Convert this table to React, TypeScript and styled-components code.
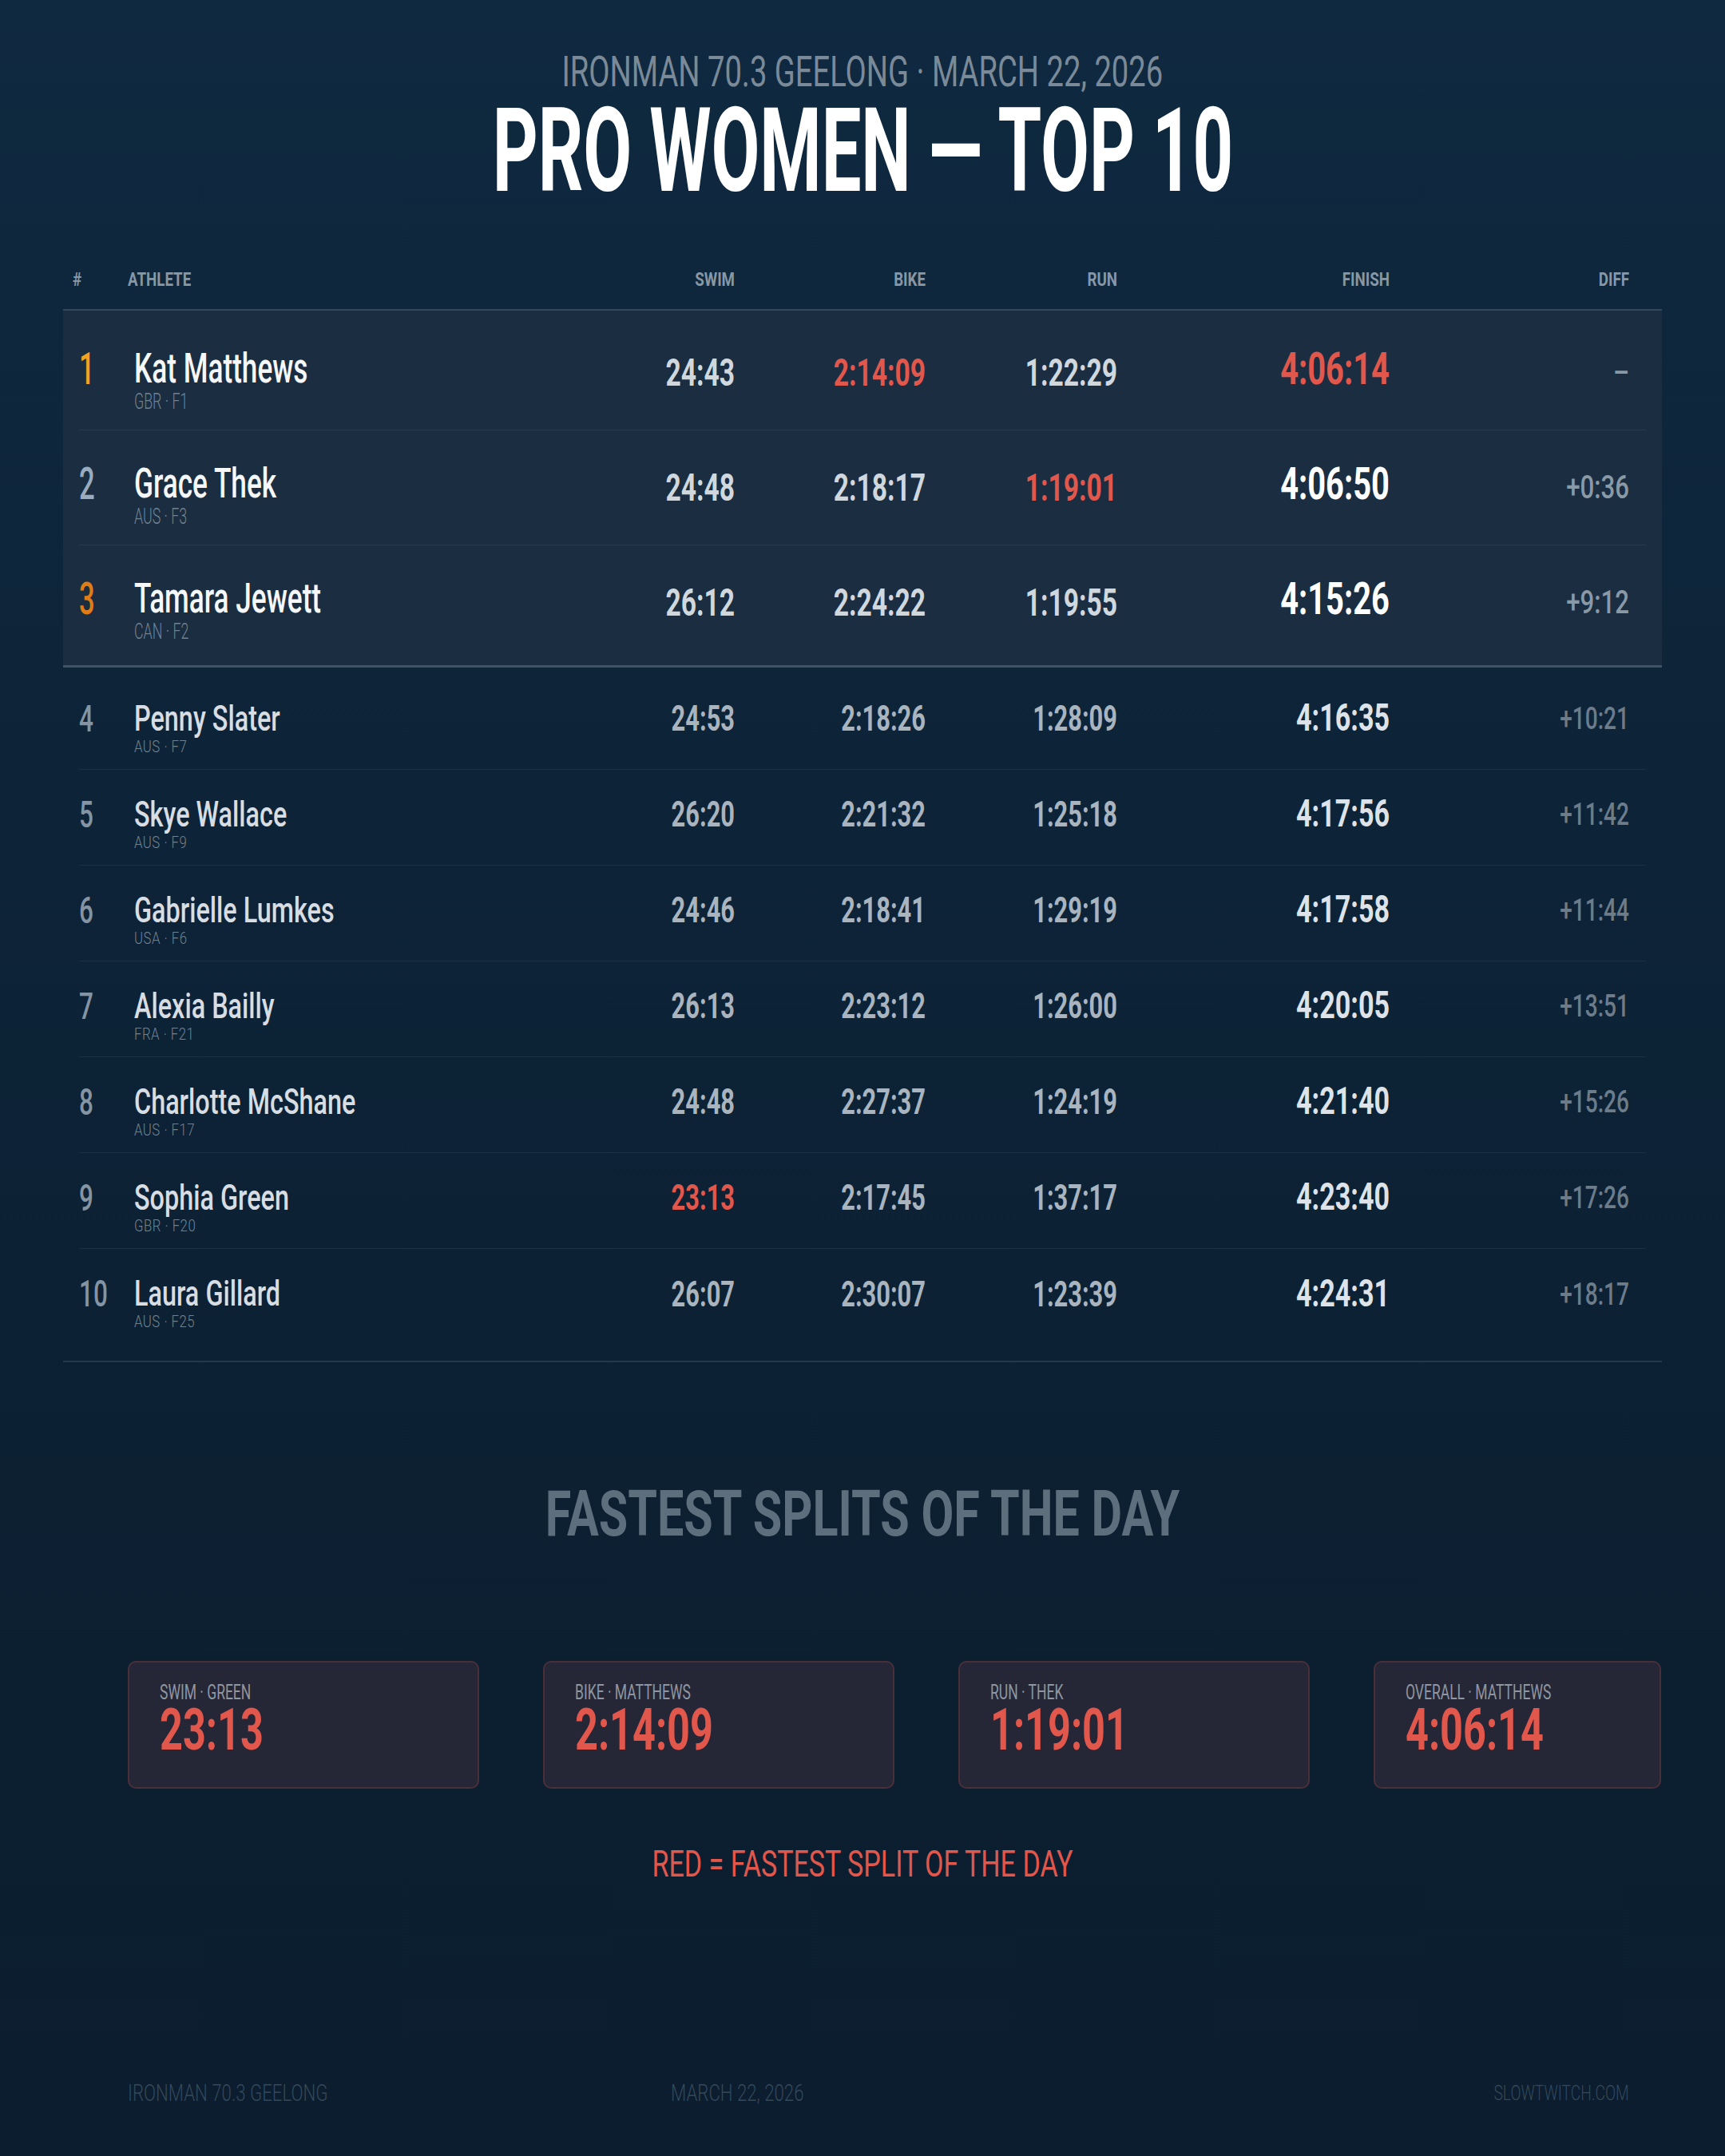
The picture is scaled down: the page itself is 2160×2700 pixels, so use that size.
import styled, { createGlobalStyle, css } from 'styled-components';

const RED = '#e2574c';

const GlobalStyle = createGlobalStyle`
  html, body {
    margin: 0;
    padding: 0;
    background: #0c1e2f;
  }
  * {
    box-sizing: border-box;
  }
`;

// no condensed face is installed, so the narrow look comes from a horizontal squeeze
const squeeze = (k: number, origin: 'left' | 'right' | 'center' = 'left') => css`
  transform: scaleX(${k});
  transform-origin: ${origin} center;
`;

const Page = styled.div`
  width: 2160px;
  height: 2700px;
  overflow: hidden;
  display: flex;
  flex-direction: column;
  background: linear-gradient(180deg, #0f2940 0%, #0d2337 40%, #0b1d2e 100%);
  font-family: Roboto, "Liberation Sans", sans-serif;
  color: #e6ebef;
`;

const Header = styled.header`
  display: flex;
  flex-direction: column;
  align-items: center;
  padding-top: 64px;
`;

const Eyebrow = styled.div`
  font-size: 53px;
  line-height: 52px;
  font-weight: 400;
  color: #7a8a98;
  white-space: nowrap;
  ${squeeze(0.72, 'center')};
`;

const Title = styled.h1`
  margin: 2px 0 0;
  font-size: 146px;
  line-height: 144px;
  font-weight: 700;
  color: #ffffff;
  white-space: nowrap;
  ${squeeze(0.605, 'center')};
`;

const Table = styled.section`
  margin: 76px 79px 0;
  display: flex;
  flex-direction: column;
  border-bottom: 2px solid #25394c;
`;

const cols = css`
  display: grid;
  grid-template-columns: 69px 1fr 220px 239px 240px 341px 300px;
  align-items: center;
`;

const HeadRow = styled.div`
  ${cols};
  padding: 0 41px 25px 12px;
  border-bottom: 2px solid #33485b;
`;

const HeadCell = styled.div<{ $right?: boolean }>`
  font-size: 24px;
  line-height: 24px;
  font-weight: 700;
  color: #8797a5;
  text-align: ${(p) => (p.$right ? 'right' : 'left')};
  ${(p) => squeeze(0.78, p.$right ? 'right' : 'left')};
`;

const Podium = styled.div`
  background: #1a2d41;
  padding: 6px 20px;
  border-bottom: 3px solid #3e5366;
`;

const Rest = styled.div`
  padding: 8px 20px 20px;
`;

const Row = styled.div<{ $top?: boolean }>`
  ${cols};
  padding-right: 21px;
  height: ${(p) => (p.$top ? '144px' : '120px')};
  border-bottom: 1px solid ${(p) => (p.$top ? '#27394c' : '#1b3044')};
  &:last-child {
    border-bottom: none;
  }
`;

const RANK_COLORS: Record<number, string> = {
  1: '#f2a21e',
  2: '#9aabbd',
  3: '#df7c16',
};

const Rank = styled.div<{ $top?: boolean; $color: string }>`
  font-size: ${(p) => (p.$top ? '55px' : '47px')};
  line-height: 1;
  padding-bottom: 9px;
  font-weight: 500;
  color: ${(p) => p.$color};
  ${(p) => squeeze(p.$top ? 0.63 : 0.67)};
`;

const Athlete = styled.div<{ $top?: boolean }>`
  display: flex;
  flex-direction: column;
  margin-top: ${(p) => (p.$top ? '20px' : '18px')};
`;

const Name = styled.div<{ $top?: boolean }>`
  font-size: ${(p) => (p.$top ? '51px' : '45px')};
  line-height: ${(p) => (p.$top ? '52px' : '44px')};
  font-weight: 500;
  white-space: nowrap;
  color: ${(p) => (p.$top ? '#f5f7f9' : '#d7dde2')};
  ${(p) => squeeze(p.$top ? 0.69 : 0.72)};
`;

const Sub = styled.div<{ $top?: boolean }>`
  font-size: ${(p) => (p.$top ? '27px' : '21px')};
  line-height: ${(p) => (p.$top ? '30px' : '26px')};
  font-weight: 300;
  letter-spacing: ${(p) => (p.$top ? '0' : '0.6px')};
  color: #718190;
  white-space: nowrap;
  ${(p) => squeeze(p.$top ? 0.66 : 0.8)};
`;

const Split = styled.div<{ $top?: boolean; $best?: boolean }>`
  text-align: right;
  font-size: ${(p) => (p.$top ? '48px' : '45px')};
  line-height: 1;
  padding-bottom: ${(p) => (p.$top ? '0' : '8px')};
  font-weight: 700;
  color: ${(p) => (p.$best ? RED : p.$top ? '#d0d7dd' : '#a9b4be')};
  ${(p) => squeeze(p.$top ? 0.7 : 0.685, 'right')};
`;

const Finish = styled.div<{ $top?: boolean; $best?: boolean }>`
  text-align: right;
  font-size: ${(p) => (p.$top ? '55px' : '48px')};
  line-height: 1;
  padding-bottom: 9px;
  font-weight: 700;
  color: ${(p) => (p.$best ? RED : p.$top ? '#ffffff' : '#dde3e8')};
  ${(p) => squeeze(p.$top ? 0.725 : 0.71, 'right')};
`;

const Diff = styled.div<{ $top?: boolean }>`
  text-align: right;
  font-size: ${(p) => (p.$top ? '40px' : '39px')};
  line-height: 1;
  padding-bottom: ${(p) => (p.$top ? '0' : '6px')};
  font-weight: 500;
  color: ${(p) => (p.$top ? '#8a99a6' : '#6c7c8a')};
  ${(p) => squeeze(p.$top ? 0.78 : 0.72, 'right')};
`;

const SectionTitle = styled.h2`
  margin: 150px 0 0;
  text-align: center;
  font-size: 79px;
  line-height: 80px;
  font-weight: 700;
  color: #5d6e7c;
  ${squeeze(0.75, 'center')};
`;

const Cards = styled.div`
  display: grid;
  grid-template-columns: 440px 440px 440px 360px;
  gap: 80px;
  margin: 144px 0 0 160px;
`;

const Card = styled.div`
  height: 160px;
  padding: 24px 38px 0;
  background: #252737;
  border: 2px solid #4a2f3b;
  border-radius: 10px;
  display: flex;
  flex-direction: column;
`;

const CardLabel = styled.div`
  font-size: 25px;
  line-height: 28px;
  font-weight: 400;
  color: #8f96a1;
  white-space: nowrap;
  ${squeeze(0.7)};
`;

const CardValue = styled.div`
  font-size: 73px;
  line-height: 64px;
  font-weight: 700;
  color: ${RED};
  ${squeeze(0.69)};
`;

const Legend = styled.div`
  margin-top: 71px;
  text-align: center;
  font-size: 46px;
  line-height: 46px;
  font-weight: 400;
  color: ${RED};
  ${squeeze(0.74, 'center')};
`;

const Footer = styled.footer`
  margin: auto 0 0;
  padding: 0 120px 65px 160px;
  display: grid;
  grid-template-columns: 680px 1fr auto;
  align-items: center;
`;

const FootText = styled.div<{ $end?: boolean }>`
  font-size: ${(p) => (p.$end ? '26px' : '30px')};
  line-height: 28px;
  font-weight: 300;
  color: #34485a;
  white-space: nowrap;
  ${(p) => squeeze(0.74, p.$end ? 'right' : 'left')};
`;

type Leg = 'swim' | 'bike' | 'run' | 'finish';

type Result = {
  rank: number;
  name: string;
  sub: string;
  swim: string;
  bike: string;
  run: string;
  finish: string;
  diff: string;
  best?: Leg[];
};

const podium: Result[] = [
  { rank: 1, name: 'Kat Matthews', sub: 'GBR · F1', swim: '24:43', bike: '2:14:09', run: '1:22:29', finish: '4:06:14', diff: '–', best: ['bike', 'finish'] },
  { rank: 2, name: 'Grace Thek', sub: 'AUS · F3', swim: '24:48', bike: '2:18:17', run: '1:19:01', finish: '4:06:50', diff: '+0:36', best: ['run'] },
  { rank: 3, name: 'Tamara Jewett', sub: 'CAN · F2', swim: '26:12', bike: '2:24:22', run: '1:19:55', finish: '4:15:26', diff: '+9:12' },
];

const rest: Result[] = [
  { rank: 4, name: 'Penny Slater', sub: 'AUS · F7', swim: '24:53', bike: '2:18:26', run: '1:28:09', finish: '4:16:35', diff: '+10:21' },
  { rank: 5, name: 'Skye Wallace', sub: 'AUS · F9', swim: '26:20', bike: '2:21:32', run: '1:25:18', finish: '4:17:56', diff: '+11:42' },
  { rank: 6, name: 'Gabrielle Lumkes', sub: 'USA · F6', swim: '24:46', bike: '2:18:41', run: '1:29:19', finish: '4:17:58', diff: '+11:44' },
  { rank: 7, name: 'Alexia Bailly', sub: 'FRA · F21', swim: '26:13', bike: '2:23:12', run: '1:26:00', finish: '4:20:05', diff: '+13:51' },
  { rank: 8, name: 'Charlotte McShane', sub: 'AUS · F17', swim: '24:48', bike: '2:27:37', run: '1:24:19', finish: '4:21:40', diff: '+15:26' },
  { rank: 9, name: 'Sophia Green', sub: 'GBR · F20', swim: '23:13', bike: '2:17:45', run: '1:37:17', finish: '4:23:40', diff: '+17:26', best: ['swim'] },
  { rank: 10, name: 'Laura Gillard', sub: 'AUS · F25', swim: '26:07', bike: '2:30:07', run: '1:23:39', finish: '4:24:31', diff: '+18:17' },
];

const fastest = [
  { label: 'SWIM · GREEN', value: '23:13' },
  { label: 'BIKE · MATTHEWS', value: '2:14:09' },
  { label: 'RUN · THEK', value: '1:19:01' },
  { label: 'OVERALL · MATTHEWS', value: '4:06:14' },
];

const ResultRow = ({ r, top }: { r: Result; top?: boolean }) => {
  const best = r.best || [];
  return (
    <Row $top={top}>
      <Rank $top={top} $color={top ? RANK_COLORS[r.rank] : '#8594a2'}>{r.rank}</Rank>
      <Athlete $top={top}>
        <Name $top={top}>{r.name}</Name>
        <Sub $top={top}>{r.sub}</Sub>
      </Athlete>
      <Split $top={top} $best={best.includes('swim')}>{r.swim}</Split>
      <Split $top={top} $best={best.includes('bike')}>{r.bike}</Split>
      <Split $top={top} $best={best.includes('run')}>{r.run}</Split>
      <Finish $top={top} $best={best.includes('finish')}>{r.finish}</Finish>
      <Diff $top={top}>{r.diff}</Diff>
    </Row>
  );
};

const App = () => {
  return (
    <>
      <GlobalStyle />
      <Page>
        <Header>
          <Eyebrow>IRONMAN 70.3 GEELONG · MARCH 22, 2026</Eyebrow>
          <Title>PRO WOMEN — TOP 10</Title>
        </Header>

        <Table>
          <HeadRow>
            <HeadCell>#</HeadCell>
            <HeadCell>ATHLETE</HeadCell>
            <HeadCell $right>SWIM</HeadCell>
            <HeadCell $right>BIKE</HeadCell>
            <HeadCell $right>RUN</HeadCell>
            <HeadCell $right>FINISH</HeadCell>
            <HeadCell $right>DIFF</HeadCell>
          </HeadRow>
          <Podium>
            {podium.map((r) => (
              <ResultRow key={r.rank} r={r} top />
            ))}
          </Podium>
          <Rest>
            {rest.map((r) => (
              <ResultRow key={r.rank} r={r} />
            ))}
          </Rest>
        </Table>

        <SectionTitle>FASTEST SPLITS OF THE DAY</SectionTitle>
        <Cards>
          {fastest.map((f) => (
            <Card key={f.label}>
              <CardLabel>{f.label}</CardLabel>
              <CardValue>{f.value}</CardValue>
            </Card>
          ))}
        </Cards>
        <Legend>RED = FASTEST SPLIT OF THE DAY</Legend>

        <Footer>
          <FootText>IRONMAN 70.3 GEELONG</FootText>
          <FootText>MARCH 22, 2026</FootText>
          <FootText $end>SLOWTWITCH.COM</FootText>
        </Footer>
      </Page>
    </>
  );
};

export default App;
